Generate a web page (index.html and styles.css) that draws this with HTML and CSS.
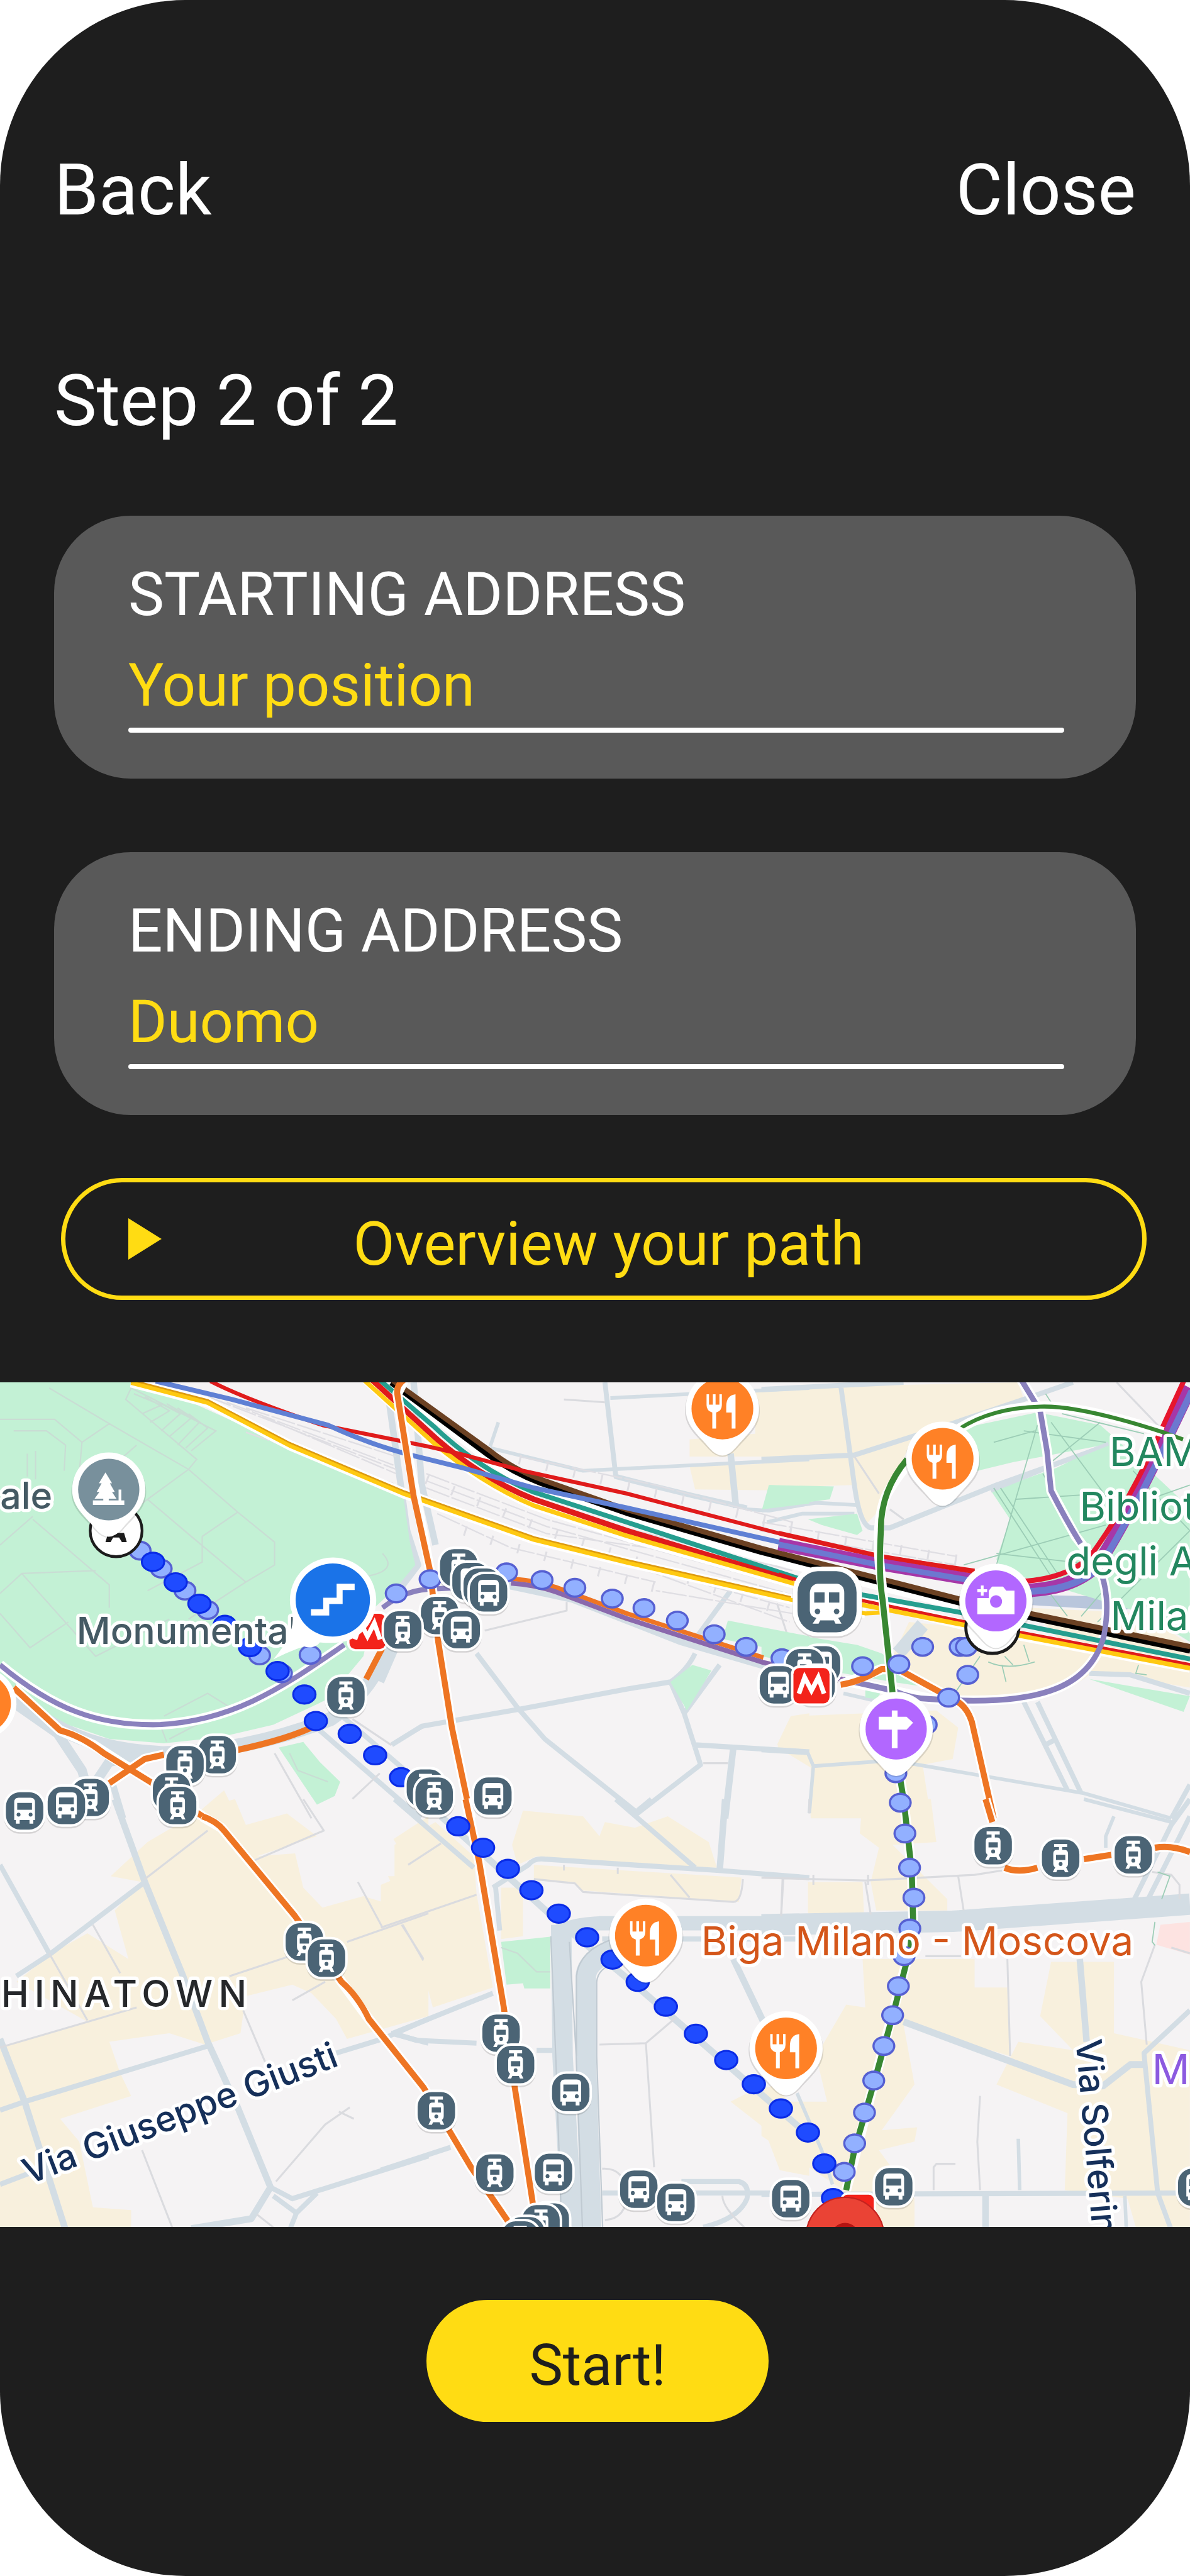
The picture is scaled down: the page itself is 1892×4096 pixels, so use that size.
FILE: index.html
```html
<!DOCTYPE html>
<html lang="en">
<head>
    <meta charset="UTF-8">
    <meta name="viewport" content="width=device-width, initial-scale=1.0">
    <title>Step 2 of 2</title>
    <link rel="stylesheet" href="styles.css">
</head>
<body>
    <div class="screen">
        <nav class="top-bar">
            <a href="#" class="nav-link">Back</a>
            <a href="#" class="nav-link">Close</a>
        </nav>
        <main>
            <form class="route-form" id="route">
                <h1 class="step">Step 2 of 2</h1>
                <div class="field">
                    <label for="start-address">STARTING ADDRESS</label>
                    <input type="text" id="start-address" value="Your position">
                </div>
                <div class="field">
                    <label for="end-address">ENDING ADDRESS</label>
                    <input type="text" id="end-address" value="Duomo">
                </div>
                <button type="button" class="overview-btn">
                    <svg class="play" viewBox="0 0 53 66" aria-hidden="true"><path d="M0 0L53 33L0 66Z"/></svg>
                    <span class="btn-text">Overview your path</span>
                </button>
            </form>

            <svg class="map" viewBox="0 0 2500 1775" role="img" aria-label="Map of the path">
                <defs>
                    <ellipse id="dl" rx="38" ry="31" fill="#92b0ff" stroke="#5660d2" stroke-width="8"/>
                    <ellipse id="dd" rx="41" ry="32" fill="#1f4bff" stroke="#0a2be6" stroke-width="7"/>
                    <g id="stop">
                        <rect x="-76" y="-66" width="152" height="146" rx="58" fill="#000" opacity=".13"/>
                        <rect x="-73" y="-70" width="146" height="140" rx="56" fill="#4b6475" stroke="#fff" stroke-width="9"/>
                    </g>
                    <g id="tram">
                        <use href="#stop"/>
                        <path fill="#fff" d="M-24 -50H24V-39H6V-29H14Q27 -29 27 -16V18Q27 28 20 32L29 49H16L12 40H-12L-16 49H-29L-20 32Q-27 28 -27 18V-16Q-27 -29 -14 -29H-6V-39H-24Z"/>
                        <rect x="-17" y="-12" width="34" height="18" fill="#4b6475"/>
                        <circle cy="20" r="7" fill="#4b6475"/>
                    </g>
                    <g id="bus">
                        <use href="#stop"/>
                        <path fill="#fff" d="M-22 -46H22Q38 -46 38 -30V32H32V45H18V32H-18V45H-32V32H-38V-30Q-38 -46 -22 -46Z"/>
                        <rect x="-27" y="-28" width="54" height="24" fill="#4b6475"/>
                        <circle cx="-22" cy="13" r="7" fill="#4b6475"/>
                        <circle cx="22" cy="13" r="7" fill="#4b6475"/>
                    </g>
                    <g id="metro">
                        <rect x="-75" y="-70" width="150" height="140" rx="30" fill="#fff"/>
                        <rect x="-66" y="-61" width="132" height="124" rx="22" fill="#f3231b"/>
                        <path d="M-46 29L-25 -28L0 18L25 -28L46 29" fill="none" stroke="#fff" stroke-width="17"/>
                    </g>
                    <g id="pin">
                        <path d="M-137 8A137 132 0 0 1 137 8C137 68 90 98 50 143Q0 195 -50 143C-90 98 -137 68 -137 8Z" fill="#000" opacity=".12"/>
                        <path d="M-134 0A134 130 0 0 1 134 0C134 60 92 88 48 138Q0 192 -48 138C-92 88 -134 60 -134 0Z" fill="#fff"/>
                    </g>
                    <g id="food">
                        <use href="#pin"/>
                        <ellipse rx="113" ry="108" fill="#ff8126"/>
                        <path fill="#fff" d="M-58 -50H-49V-14H-35V-50H-25V-14H-11V-50H-2V-12Q-2 8 -23 14V70H-37V14Q-58 8 -58 -12ZM48 -50V70H34V14H14V-8Q14 -46 48 -50Z"/>
                    </g>
                </defs>

                <g transform="scale(.574 .5995)">
                    <!-- land -->
                    <rect width="4356" height="2962" fill="#f5f3f4"/>
                    <g class="built">
                        <path transform="translate(0 -40)" d="M700 1568L820 1470L870 1568Z"/>
                        <path transform="translate(0 1461)" d="M540 150L700 60L780 20L860 0L900 90L1050 50L1160 130L940 200L1080 190L1110 310L1180 380L1330 340L1400 360L1450 330L1420 270L1520 270L1440 140L1568 60V760L1270 840L1230 770L1140 680L1070 650L900 690L880 820L750 860L620 820L400 850L440 960L480 1040L220 1120L290 1200L340 1430L480 1440V1500H0V870L320 780L60 640L190 540L320 470L470 560L420 390L520 290L405 270Z"/>
                        <path transform="translate(1394 -40)" d="M1370 70H1568V300H1130V240L1370 220ZM1130 335L1568 320V420L1150 415ZM1500 1210L1568 1200V1335L1450 1310Z"/>
                        <path transform="translate(1394 1461)" d="M480 160L520 40L740 60L800 130L820 80L930 100L1050 60L1200 150L1230 240L1140 240L570 200L500 230ZM50 160L200 80L340 200L350 330L410 660L190 730L160 620L110 760L0 800V300L50 280ZM560 230L1320 275L1310 360L740 320L700 290L560 285ZM440 310H520V480L440 490ZM1280 1060L1340 1030L1450 1000L1568 1180V1320L1460 1300L1400 1150Z"/>
                        <path transform="translate(2787 -40)" d="M0 60L940 40L960 100L560 220L440 480L380 540L340 400L0 410ZM540 880L750 900L1250 1000Q1200 1110 1000 1140L700 1150L540 1060L480 1000ZM980 830L1400 850L1568 960V1110L1200 1050ZM60 1310L120 1210L640 1190L720 1250L700 1360L590 1380L620 1568H180V1390L60 1320Z"/>
                        <path transform="translate(2787 1461)" d="M170 290H370L375 400H170ZM180 0H300V60H180ZM370 0H620L640 150L480 160L680 350L680 390H420L400 290L430 170L360 120ZM370 560H780V660H900L910 900L520 790L560 1000L440 1160L570 1150L560 1200L430 1230L560 1400V1500H400L300 1370L0 1180V1060L240 1060L200 900L310 720L380 730ZM1060 570H1290V820L1568 880V1500H1370L1340 1400L1110 1370L1120 1100L860 1000L940 850L1140 880L1020 760Z"/>
                    </g>
                    <path transform="translate(2787 1461)" fill="#fde3e1" d="M1460 440L1568 430V545L1445 510Z"/>
                    <path class="water" transform="translate(2787 -40)" d="M990 785L1230 790L1390 820L1320 840L980 820Z"/>

                    <!-- roads -->
                    <g class="road">
                        <g transform="translate(0 -40)">
                            <path class="w50" d="M1430 900Q1400 1100 1210 1220Q900 1335 600 1340Q350 1330 200 1240L0 1090"/>
                            <path class="w35" d="M60 1170L210 1270L300 1400L330 1500M330 1470L400 1370L560 1340"/>
                            <path class="w26" d="M410 1440L450 1568M1420 80L1490 560L1530 680L1450 780"/>
                            <path class="w20" d="M1170 1260L1540 1568M1240 1200L1568 1470"/>
                            <path class="w8" d="M1005 1340L1140 1568M1290 1220L1430 1310L1568 1240M1290 1500L1390 1410"/>
                        </g>
                        <g transform="translate(0 1461)">
                            <path class="w26" d="M420 0L530 290L670 620L760 850L870 1080L990 1360L920 1470L700 1505M0 840L90 1060L240 1510"/>
                            <path class="w20" d="M0 230L180 540M60 620L180 545L530 290M0 1090L90 1060L760 865M0 1350L110 1310M990 1360L1070 1400L1568 1250M1000 1390L1085 1450L1160 1380M1085 1450L1060 1510M1230 890L1400 840L1568 770M1430 820L1568 855"/>
                            <path class="w8" d="M180 540L320 775M530 280L760 110M340 440L440 610M520 1230L630 1500M890 740L970 920M1010 1340L1190 1140L1280 1080M1240 1095L1295 1120M930 215L1185 110L1110 0M0 870L500 730M840 620L1060 550M1270 500L1568 400M1310 290L1400 450M1470 440L1550 560M1070 705L1190 640M940 1455L1000 1500"/>
                        </g>
                        <g transform="translate(1394 -40)">
                            <path class="w26" d="M120 40L150 400L200 610M0 1090L50 980M1280 290L1300 480M1290 1320L1260 1568M430 745L700 800L1100 950L1568 1080"/>
                            <path class="w20" d="M820 40L860 370Q1100 430 1340 480M350 990L500 1180L600 1290L940 1550L1170 1380L1110 1200L1060 1090M40 1310L150 1245L510 1185L900 1115L1060 1090Q1120 1050 1150 990M1110 1200L1240 1030M1140 1310L1568 1335M1150 940L1280 770"/>
                            <path class="w14" d="M840 95L1568 60M400 270L740 350L1568 310M1340 485L1420 490L1568 465M400 265L430 180"/>
                            <path class="w8" d="M670 100L820 110M380 910L680 840L680 810M1180 1375H1270M1450 815L1510 990"/>
                        </g>
                        <g transform="translate(1394 1461)">
                            <path class="w75" d="M660 440L665 900L700 1510M770 1510L750 900V620Q755 560 870 520"/>
                            <path class="w50" d="M670 460Q700 440 800 435H1568"/>
                            <path class="w26" d="M220 60L650 430L930 650L1568 1180M1260 0L1240 250M1290 560L1400 780"/>
                            <path class="w20" d="M50 0L340 240M860 0L1150 240M940 40L990 0M410 310L540 230Q560 205 600 210L1240 250L1568 275M420 310L435 460M45 820L410 680M45 820L130 845L350 855M570 880H640M0 1300L255 1220M810 1380H1568M1100 1340H1310Q1350 1350 1340 1400Q1310 1470 1180 1500M810 490H1568"/>
                            <path class="w8" d="M800 860L970 855L1080 765M970 855L1000 1290M560 280L710 295L740 325L1290 360Q1320 360 1325 280M1060 265L1130 345M1470 280L1465 410M810 1295Q890 1290 900 1380Q900 1470 820 1475M1250 1390Q1250 1430 1330 1500M100 230L220 155M0 450L350 335M80 440L155 565M670 230V250M867 240V262"/>
                            <!-- kerbs of the wide avenue -->
                            <path class="kerb" d="M622 480L640 900L662 1510M690 500L715 900L738 1510M716 900V620Q725 530 850 490M790 900V640Q795 590 860 575M790 900L812 1510"/>
                        </g>
                        <g transform="translate(2787 -40)">
                            <path class="w50" d="M500 990L590 890"/>
                            <path class="w20" d="M290 50L340 400Q360 540 400 550H470L860 400L1270 260M0 310L340 295L650 200L960 100L1140 40M960 1160L1120 1470M1010 1160L1170 1480M1040 1310L1080 1290M1200 1060L1350 1065L1568 1130M1500 1568L1568 1450M0 65L300 50L520 40"/>
                            <path class="w14" d="M0 490L200 462L350 470M20 530L150 500H340M190 1385L480 1365L1180 1480L1500 1568M0 1330L170 1340L190 1385L175 1550M300 1130L480 1170"/>
                            <path class="w8" d="M340 300L430 430M470 485L520 520M1300 40L1490 230"/>
                        </g>
                        <g transform="translate(2787 1461)">
                            <path class="w75" d="M0 440L700 428L1568 368"/>
                            <path class="w26" d="M520 780L1140 1000L1250 1005L1350 930H1400M1165 560L1190 850M820 1390V1510"/>
                            <path class="w20" d="M1568 740L1400 890L1450 1380L1500 1510M0 1385L1568 1380M1568 0L1500 90L1360 360M1568 60L1410 360"/>
                            <path class="w14" d="M1180 0L1500 80M940 1190L945 1370M1330 1390L1335 1500M130 1030L220 1230L260 1350M1260 170V130L1290 60"/>
                            <path class="w8" d="M0 275L380 285L780 265L880 250M80 280L72 410M380 290L400 405M720 270L740 390M190 265V300M390 265V300M900 560L910 900M1440 510L1390 640L1410 860M800 1040L790 1200L800 1370M630 1370V1290L640 1278H710M600 550H730M1500 520L1568 540M175 0V50M1430 255L1500 265L1530 300V350"/>
                        </g>
                    </g>

                    <!-- parks -->
                    <g class="park">
                        <path transform="translate(0 -40)" d="M0 40H480L700 110L1000 240L1400 400L1475 430L1500 600L1520 680L1450 760L1370 830L1330 1000L1200 1150L1000 1240L800 1285L600 1305L400 1290L250 1240L100 1160L0 1080ZM1020 1320L1110 1300L1170 1370L1245 1440L1225 1490L1160 1520Z"/>
                        <path transform="translate(1394 -40)" d="M1420 400L1568 410V465L1395 485ZM1270 875L1568 930V1000L1250 940ZM1140 1030L1210 1050L1120 1190L1060 1090Z"/>
                        <path transform="translate(1394 1461)" d="M440 500L620 482V663H525L520 645L460 650Z"/>
                        <path transform="translate(2787 -40)" d="M30 400L265 405L250 450L10 480ZM170 520L350 500L370 560L350 575L220 540ZM740 200L1010 145L1240 190L1300 240L1568 480V950L1400 850L880 700L860 660L910 520L840 420L1080 340L1250 260L920 320L790 350ZM0 905L350 960L440 990L620 1110L480 1090L300 1060L0 1000ZM380 1110L440 1125L420 1150L380 1145ZM1200 1080L1568 1140L1545 1195Z"/>
                    </g>
                    <path class="road w14" transform="translate(2787 -40)" d="M840 420L1270 255"/>
                    <g class="trail">
                        <g transform="translate(0 -40)">
                            <path d="M180 60L400 185L690 345L870 495L1005 600V680L900 740L690 870M400 185L300 250L290 360M0 170H200L300 250M50 210H170L240 260L235 350M690 345L540 450L380 560M540 450L700 580L900 740M350 700L80 710L0 780M80 710L350 1000L620 870M120 520L400 750V830M690 345L720 310L460 100L480 60L790 210L700 280M0 610L120 510M500 260L380 360M0 850L110 970L250 880M740 580V670L540 770M1400 640Q1460 700 1340 720M590 1250L610 1300M600 1210L760 1130L860 1190M620 1290L740 1230M130 280V380M100 290V370M870 495L740 580"/>
                            <path d="M490 80L590 120L520 150M530 90L620 140L550 180M570 105L660 150L590 210M610 115L700 165L620 230M650 130L730 180L650 260M690 150L760 200L680 270M1060 1340L1090 1400L1200 1440"/>
                        </g>
                        <path transform="translate(1394 1461)" d="M440 520L500 540L570 605H620"/>
                        <path class="trail-dark" transform="translate(2787 -40)" d="M1010 190L860 680M850 410L1060 720M875 410L1090 720M930 450L1250 430M1030 360L1120 510M1060 180L1300 490L1568 400M740 680L1260 540M860 640L1230 680M1100 150L1400 220M960 210L1260 250M850 250L1000 210M1060 320L1240 180M1230 880L1568 560M1040 760L1120 860M1170 860L1260 760M1360 350L1568 560M700 1140L800 1000M880 1030L895 1090M830 1020Q900 1050 1000 1020M890 1000L920 1030M960 960L980 1020M1380 1030L1370 1060L1410 1065M1040 80L1060 110"/>
                        <path class="trail-dark" transform="translate(2787 1461)" d="M1450 255L1495 270L1465 350M1440 430L1430 500L1440 512"/>
                    </g>

                    <!-- rail yard -->
                    <g class="yard" transform="translate(0 -40)">
                        <path d="M760 90L1450 345M830 110L1440 330M900 130L1450 300M900 215L1440 395M960 160L1450 360"/>
                        <path d="M1560 360L2000 520L2900 760M1560 385L2000 545L2900 785M1560 410L2000 570L2900 690M1560 440L2000 595L2890 830M1580 470L1850 570L2400 710L2890 880M1600 500L1870 620L2400 740M1700 340L2000 480L2900 700M1900 300L2400 400L2900 530M2900 850L2400 770M2780 560L3500 680M2790 530L3500 650M2790 650L3450 800"/>
                        <path class="ties" d="M1560 380L2000 560L2890 850M1700 560L1850 610L2400 760M1900 310L2900 545M2790 545L3560 670"/>
                    </g>

                    <!-- transit lines -->
                    <g class="line" transform="translate(0 -40)">
                        <path class="halo" d="M480 40L760 110L1060 260L1480 430L1954 590L2294 670L2894 800L3167 850M1340 30L1594 255Q1780 400 1954 470L2294 580L2904 745L3527 890L4356 1040M1414 30L1794 310Q1880 370 1980 410L2294 510L2787 650L3507 820"/>
                        <path class="halo" d="M0 1030C200 1190 360 1240 560 1240C860 1235 1060 1090 1260 960"/>
                        <path class="halo" d="M3087 1085L3407 1150Q3700 1170 3847 1120Q4000 1070 4040 930Q4070 780 4017 680L3937 580L3847 420L3832 280L3807 140L3737 30"/>
                        <path stroke="#dd9a10" stroke-width="14" d="M480 36L760 106L1060 256L1480 426L1954 586L2294 666L2894 796"/>
                        <path stroke="#ffc911" stroke-width="14" d="M480 42L760 112L1060 262L1480 432L1954 592L2294 672L2894 802L3167 850L3240 846"/>
                        <path stroke="#000" stroke-width="22" d="M1432 40L1786 292Q1880 356 1980 392L2294 497L2787 634L3147 722L3507 810L4356 980"/>
                        <path stroke="#6b4123" stroke-width="18" d="M1438 34L1794 280Q1880 345 1980 380L2294 486L2787 622L3147 710L3507 798L4356 966"/>
                        <path stroke="#259e8f" stroke-width="17" d="M1380 24L1594 200Q1760 350 1954 425L2294 530L2914 725L3157 785L3507 845L4356 1010"/>
                        <path stroke="#e01b1b" stroke-width="20" d="M1360 30L1594 235Q1760 375 1954 450L2294 560L2904 735"/>
                        <path stroke="#e01b1b" stroke-width="12" d="M2850 712L3157 805L3507 875L4356 1030"/>
                        <path stroke="#ffc911" stroke-width="16" d="M1330 30L1594 258Q1770 398 1954 472L2294 578L2904 745L3157 820L3527 890L4356 1042"/>
                        <path stroke="#e01b1b" stroke-width="14" d="M770 36Q900 100 1180 190L1568 265L1680 290L1914 350L2294 430L2874 575L3217 650L3567 700"/>
                        <path stroke="#5f80d4" stroke-width="17" d="M570 36L850 100L1200 190Q1380 270 1568 310L1694 340L1954 410L2294 480L2874 605"/>
                        <path stroke="#a637a8" stroke-width="44" d="M2850 607L3217 677L3580 735"/>
                        <path stroke="#e01b1b" stroke-width="15" d="M2850 568L3217 648L3567 704"/>
                        <path stroke="#6d78d0" stroke-width="20" d="M2850 608L3217 680L3580 738"/>
                        <path stroke="#a637a8" stroke-width="48" d="M3640 765Q3900 790 4017 680Q4140 500 4356 60"/>
                        <path stroke="#6d78d0" stroke-width="24" d="M3640 768Q3900 795 4022 690Q4150 500 4362 70"/>
                        <path stroke="#e6162d" stroke-width="18" d="M3640 738Q3880 750 3990 650Q4120 480 4220 270L4335 30"/>
                        <path stroke="#8a81bd" stroke-width="18" d="M0 1030C200 1190 360 1240 560 1240C860 1235 1060 1090 1260 960M1400 830Q1480 770 1568 765L1674 760"/>
                        <path class="halo" d="M1480 30L1454 80L1474 200L1574 700L1604 950L1654 1250L1724 1568"/>
                        <path stroke="#ee7523" stroke-width="16" d="M1870 728Q1960 735 2034 758L2294 850L2794 1005"/>
                        <path stroke="#8a68ac" stroke-width="17" d="M1870 744Q1960 750 2034 774L2294 868L2794 1022L3087 1082"/>
                        <path stroke="#8a81bd" stroke-width="20" d="M3087 1082L3267 1120Q3340 1150 3407 1150Q3700 1170 3847 1120Q4000 1070 4040 930Q4070 780 4017 680M3955 605Q3900 520 3847 420L3832 280L3807 140L3737 30"/>
                        <path class="halo" d="M3077 1100L3227 1045H3287L3487 1150Q3537 1170 3557 1230L3637 1568"/>
                        <path class="halo" d="M50 1110L220 1260L340 1310L550 1440L740 1560M400 1445L530 1360L600 1345"/>
                        <g stroke="#ee7523" stroke-width="22">
                            <path d="M1480 30Q1450 50 1454 80L1474 200L1514 440L1574 700L1604 950L1654 1250L1724 1568"/>
                            <path d="M50 1110L220 1260Q300 1280 380 1340L550 1440L740 1560M400 1445L530 1360L600 1345M860 1330Q1060 1290 1160 1240M1340 1080L1400 970"/>
                            <path d="M3077 1100Q3147 1090 3227 1045H3287L3487 1150Q3537 1170 3557 1230L3637 1568"/>
                        </g>
                        <path class="halo" d="M4257 215Q3950 120 3807 125Q3620 130 3500 210Q3340 270 3247 430Q3200 520 3224 720L3267 1130"/>
                        <path stroke="#388732" stroke-width="14" d="M4330 240L4257 215Q3950 120 3807 125Q3620 130 3500 210"/>
                        <path stroke="#388732" stroke-width="22" d="M3320 310Q3222 420 3224 560Q3215 720 3230 800L3267 1130"/>
                    </g>
                    <g class="line" transform="translate(0 1461)">
                        <path class="halo" d="M740 60L810 100L1080 410L1250 640L1350 770L1550 1010L1724 1290L1860 1480M1704 0L1754 220L1844 730L1884 1010L1954 1440M3607 0L3632 80M3677 240Q3727 260 3797 240M3967 210L4067 195M4227 170Q4287 160 4356 185M3290 -100L3307 0L3337 250L3342 420L3332 520L3197 1000L3097 1370"/>
                        <g stroke="#ee7523" stroke-width="22">
                            <path d="M740 60Q790 75 820 110L1080 410L1250 640Q1310 690 1350 770L1550 1010L1724 1290L1860 1480"/>
                            <path d="M1704 0L1754 220L1844 730L1884 1010L1954 1440M3607 0L3632 80M3677 240Q3727 260 3797 240M3967 210L4067 195M4227 170Q4287 160 4356 185"/>
                        </g>
                        <path stroke="#388732" stroke-width="22" d="M3290 -100L3307 0L3337 250L3342 420L3332 520L3267 760L3197 1000L3127 1230L3097 1370"/>
                    </g>

                    <!-- walking dots -->
                    <g transform="translate(0 -40)">
                        <use href="#dl" x="513" y="630"/><use href="#dl" x="590" y="693"/><use href="#dl" x="677" y="770"/><use href="#dl" x="760" y="838"/><use href="#dl" x="950" y="997"/><use href="#dl" x="1030" y="1060"/><use href="#dl" x="1135" y="995"/><use href="#dl" x="1450" y="780"/>
                        <use href="#dl" x="1574" y="730"/><use href="#dl" x="1854" y="706"/><use href="#dl" x="1984" y="733"/><use href="#dl" x="2104" y="760"/><use href="#dl" x="2241" y="798"/><use href="#dl" x="2357" y="831"/><use href="#dl" x="2479" y="875"/><use href="#dl" x="2614" y="923"/><use href="#dl" x="2731" y="967"/><use href="#dl" x="2862" y="1007"/>
                        <use href="#dl" x="3157" y="1035"/><use href="#dl" x="3290" y="1028"/><use href="#dl" x="3377" y="967"/><use href="#dl" x="3514" y="967"/><use href="#dl" x="3537" y="967"/><use href="#dl" x="3542" y="1065"/><use href="#dl" x="3472" y="1145"/><use href="#dl" x="3390" y="1240"/><use href="#dl" x="3279" y="1410"/><use href="#dl" x="3295" y="1513"/>
                        <use href="#dd" x="560" y="669"/><use href="#dd" x="643" y="741"/><use href="#dd" x="730" y="816"/><use href="#dd" x="823" y="890"/><use href="#dd" x="915" y="968"/><use href="#dd" x="1016" y="1052"/><use href="#dd" x="1114" y="1134"/><use href="#dd" x="1156" y="1227"/><use href="#dd" x="1280" y="1272"/><use href="#dd" x="1373" y="1347"/><use href="#dd" x="1468" y="1424"/>
                        <ellipse cx="425" cy="560" rx="95" ry="91" fill="#fff" stroke="#1c1c1c" stroke-width="10"/>
                        <path d="M386 600L396 568H454L464 600H446L436 584H414L405 600Z" fill="#1c1c1c"/>
                        <ellipse cx="3632" cy="900" rx="97" ry="90" fill="#fff" stroke="#1c1c1c" stroke-width="11"/>
                    </g>
                    <g transform="translate(0 1461)">
                        <use href="#dl" x="3312" y="120"/><use href="#dl" x="3329" y="240"/><use href="#dl" x="3345" y="345"/><use href="#dl" x="3330" y="453"/><use href="#dl" x="3309" y="550"/><use href="#dl" x="3288" y="655"/><use href="#dl" x="3267" y="757"/><use href="#dl" x="3235" y="865"/><use href="#dl" x="3198" y="986"/><use href="#dl" x="3164" y="1098"/><use href="#dl" x="3128" y="1206"/><use href="#dl" x="3090" y="1306"/>
                        <use href="#dd" x="1677" y="95"/><use href="#dd" x="1768" y="170"/><use href="#dd" x="1859" y="244"/><use href="#dd" x="1945" y="319"/><use href="#dd" x="2045" y="401"/><use href="#dd" x="2149" y="484"/><use href="#dd" x="2242" y="562"/><use href="#dd" x="2334" y="640"/><use href="#dd" x="2437" y="727"/><use href="#dd" x="2547" y="822"/><use href="#dd" x="2658" y="914"/><use href="#dd" x="2759" y="999"/><use href="#dd" x="2858" y="1084"/><use href="#dd" x="2957" y="1168"/><use href="#dd" x="3017" y="1277"/><use href="#dd" x="3049" y="1398"/>
                    </g>
                </g>

                <!-- place names -->
                <g class="names">
                    <text class="place" x="110" y="266" text-anchor="end">ale</text>
                    <text class="place" x="161" y="550">Monumentale</text>
                    <text class="district" x="530" y="1312" text-anchor="end">CHINATOWN</text>
                    <text class="street" transform="translate(60 1686) rotate(-21)">Via Giuseppe Giusti</text>
                    <text class="street" transform="translate(2260 1382) rotate(85)">Via Solferino</text>
                    <text class="food-name" x="1473" y="1204">Biga Milano - Moscova</text>
                    <text class="garden" x="2331" y="176">BAM</text>
                    <text class="garden" x="2268" y="291">Biblioteca</text>
                    <text class="garden" x="2240" y="405">degli Alberi</text>
                    <text class="garden" x="2333" y="521">Milano</text>
                    <text class="museum" x="2420" y="1474">M</text>
                </g>

                <g transform="scale(.574 .5995)">
                    <!-- stops -->
                    <g transform="translate(0 -40)">
                        <use href="#tram" x="330" y="1495"/><use href="#bus" x="243" y="1523"/><use href="#bus" x="90" y="1542"/>
                        <use href="#tram" x="795" y="1345"/><use href="#tram" x="677" y="1380"/><use href="#tram" x="628" y="1475"/><use href="#tram" x="650" y="1523"/>
                        <use href="#tram" x="1266" y="1138"/>
                        <use href="#tram" x="1679" y="690"/><use href="#bus" x="1724" y="738"/><use href="#bus" x="1765" y="758"/><use href="#bus" x="1788" y="778"/>
                        <use href="#tram" x="1609" y="857"/><use href="#metro" x="1345" y="912"/><use href="#tram" x="1474" y="908"/><use href="#bus" x="1688" y="907"/>
                        <use href="#tram" x="1557" y="1462"/><use href="#tram" x="1589" y="1490"/><use href="#bus" x="1804" y="1490"/>
                        <use href="#bus" x="3007" y="1030"/><use href="#tram" x="2945" y="1040"/><use href="#bus" x="2987" y="1100"/><use href="#bus" x="2849" y="1100"/><use href="#metro" x="2970" y="1102"/>
                        <rect x="2899" y="690" width="258" height="246" rx="92" fill="#000" opacity=".12"/>
                        <rect x="2901" y="686" width="254" height="244" rx="90" fill="#fff"/>
                        <rect x="2919" y="702" width="216" height="214" rx="74" fill="#4b6475"/>
                        <path fill="#fff" fill-rule="evenodd" d="M2992 746H3064Q3090 750 3090 778V842Q3088 862 3068 866L3080 886H3058L3052 874H3002L2996 886H2974L2988 866Q2966 862 2964 842V778Q2966 750 2992 746ZM2980 776V812H3018V776ZM3034 776V812H3072V776Z"/>
                        <circle cx="2992" cy="843" r="10" fill="#4b6475"/><circle cx="3062" cy="843" r="10" fill="#4b6475"/>
                    </g>
                    <g transform="translate(0 1461)">
                        <use href="#tram" x="1114" y="500"/><use href="#tram" x="1195" y="557"/>
                        <use href="#tram" x="1597" y="1092"/><use href="#tram" x="1834" y="820"/><use href="#tram" x="1887" y="930"/><use href="#bus" x="2089" y="1028"/>
                        <use href="#tram" x="1811" y="1310"/><use href="#bus" x="2026" y="1308"/>
                        <use href="#tram" x="2014" y="1482"/><use href="#tram" x="1980" y="1488"/><use href="#tram" x="1924" y="1530"/><use href="#tram" x="1904" y="1545"/>
                        <use href="#bus" x="2338" y="1367"/><use href="#bus" x="2474" y="1413"/><use href="#bus" x="2894" y="1400"/><use href="#bus" x="3271" y="1358"/>
                        <use href="#tram" x="3635" y="163"/><use href="#tram" x="3882" y="207"/><use href="#tram" x="4148" y="195"/><use href="#bus" x="4380" y="1360"/>
                    </g>

                    <!-- pins -->
                    <g transform="translate(0 -40)">
                        <ellipse cx="-70" cy="1165" rx="130" ry="125" fill="#fff"/>
                        <ellipse cx="-70" cy="1165" rx="110" ry="106" fill="#ff8126"/>
                        <use href="#food" x="2644" y="132"/>
                        <use href="#food" x="3450" y="308"/>
                        <g transform="translate(398 416)">
                            <use href="#pin"/>
                            <ellipse rx="112" ry="108" fill="#78909c"/>
                            <path fill="#fff" d="M-12 -60L12 -22H4L22 8H12L28 32H0V38H36V0H46V38H57V54H-58V38H-20V32H-52L-34 8H-44L-26 -22H-36Z"/>
                        </g>
                        <g transform="translate(1218 803)">
                            <path d="M-154 30A158 150 0 1 1 60 140Q20 155 -50 148Q-130 165 -218 208Q-130 110 -150 40Z" fill="#fff"/>
                            <ellipse rx="136" ry="128" fill="#1a73e8"/>
                            <path d="M-80 43H-24V3H25V-46H80" fill="none" stroke="#fff" stroke-width="22"/>
                        </g>
                        <g transform="translate(3645 806)">
                            <use href="#pin"/>
                            <ellipse rx="112" ry="107" fill="#b267ff"/>
                            <path fill="#fff" fill-rule="evenodd" d="M-68 -10H-26V-36L-14 -50H26L38 -36H68V47H-68ZM0 -20A22 22 0 1 0 1 -20Z"/>
                            <path d="M-50 -54V-18M-68 -36H-32" stroke="#fff" stroke-width="10"/>
                        </g>
                        <g transform="translate(3280 1255)">
                            <use href="#pin"/>
                            <ellipse rx="112" ry="107" fill="#b267ff"/>
                            <path fill="#fff" d="M-16 -65H5V-43H38L62 -22L38 2H5V67H-16V2H-64V-43H-16Z"/>
                        </g>
                    </g>
                    <g transform="translate(0 1461)">
                        <use href="#food" x="2364" y="478"/>
                        <use href="#food" x="2877" y="873"/>
                        <rect x="3080" y="1382" width="122" height="130" rx="22" fill="#f3231b" stroke="#fff" stroke-width="8"/>
                        <ellipse cx="3093" cy="1535" rx="143" ry="140" fill="#ea4335" stroke="#c5221f" stroke-width="5"/>
                        <ellipse cx="3093" cy="1535" rx="52" ry="50" fill="#b31412"/>
                    </g>
                </g>
            </svg>
        </main>
        <footer class="bottom-bar">
            <button type="submit" form="route" class="start-btn"><span class="btn-text">Start!</span></button>
        </footer>
    </div>
</body>
</html>
```

FILE: styles.css
```css
* {
    box-sizing: border-box;
}
body {
    margin: 0;
    background: white;
    font-family: Roboto, "Liberation Sans", sans-serif;
}
.screen {
    min-height: 100vh;
    display: flex;
    flex-direction: column;
    background: #1e1e1e;
    border-radius: 295px;
    overflow: hidden;
}
.top-bar {
    display: flex;
    justify-content: space-between;
    padding: 236px 86px 0;
}
.nav-link {
    color: white;
    font-size: 114px;
    line-height: 132px;
    text-decoration: none;
}
.route-form {
    display: flex;
    flex-direction: column;
    padding: 203px 86px 131px;
}
.step {
    margin: 0;
    color: white;
    font-size: 114px;
    font-weight: 400;
    line-height: 132px;
}
.field {
    display: flex;
    flex-direction: column;
    margin-top: 117px;
    padding: 70px 114px 73px 118px;
    background: #595959;
    border-radius: 122px;
}
.field label {
    color: white;
    font-size: 96px;
    line-height: 110px;
}
.field input {
    width: 100%;
    height: 110px;
    margin-top: 35px;
    padding: 0;
    border: 0;
    outline: none;
    background: transparent;
    color: #ffdc13;
    font-family: inherit;
    font-size: 94px;
    line-height: 110px;
}
.field::after {
    content: "";
    height: 8px;
    margin-top: 12px;
    background: white;
    border-radius: 4px;
}
.overview-btn {
    display: flex;
    align-items: center;
    height: 194px;
    margin: 100px -17px 0 11px;
    padding: 0 138px 0 100px;
    background: transparent;
    border: 7px solid #ffdc13;
    border-radius: 97px;
    color: #ffdc13;
    font-family: inherit;
    font-size: 96px;
    line-height: 110px;
    cursor: pointer;
}
.play {
    width: 53px;
    height: 66px;
    fill: #ffdc13;
}
.btn-text {
    flex: 1;
    padding-top: 16px;
    text-align: center;
}
.bottom-bar {
    display: flex;
    justify-content: center;
    padding: 116px 0 116px 8px;
}
.start-btn {
    display: flex;
    align-items: center;
    width: 544px;
    height: 194px;
    padding: 0;
    background: #ffdc13;
    border: 0;
    border-radius: 97px;
    color: #1e1e1e;
    font-family: inherit;
    font-size: 90px;
    line-height: 110px;
    cursor: pointer;
}

/* map */
.map {
    display: block;
    width: 100%;
    height: auto;
    overflow: hidden;
}
.built {
    fill: #f8f0dd;
}
.park {
    fill: #c3f1d5;
}
.water {
    fill: #b9c6dc;
}
.road {
    fill: none;
    stroke: #d3dde4;
    stroke-linejoin: round;
}
.w75 {
    stroke-width: 75px;
}
.w50 {
    stroke-width: 50px;
}
.w35 {
    stroke-width: 35px;
}
.w26 {
    stroke-width: 24px;
}
.w20 {
    stroke-width: 18px;
}
.w14 {
    stroke-width: 13px;
}
.w8 {
    stroke-width: 7px;
    stroke: #dadbdf;
}
.kerb {
    stroke-width: 5px;
    stroke: #c0cad2;
}
.trail {
    fill: none;
    stroke: #c9ddd4;
    stroke-width: 5px;
}
.trail-dark {
    stroke: #9ccdb6;
    stroke-width: 4px;
}
.yard {
    fill: none;
    stroke: #dfdee3;
    stroke-width: 5px;
    stroke-dasharray: 90 8;
}
.ties {
    stroke-width: 34px;
    stroke-dasharray: 7 95;
}
.line {
    fill: none;
    stroke-linejoin: round;
}
.halo {
    stroke: white;
    stroke-width: 36px;
}
.names {
    font-family: Inter, "Open Sans", sans-serif;
    font-weight: 500;
    stroke: white;
    stroke-width: 14px;
    stroke-linejoin: round;
    paint-order: stroke;
}
.place {
    fill: #455a64;
    font-size: 78px;
}
.district {
    fill: #26282b;
    font-size: 78px;
    letter-spacing: 12px;
}
.street {
    fill: #16305a;
    font-size: 75px;
}
.food-name {
    fill: #d4561a;
    font-size: 84px;
    font-weight: 400;
}
.garden {
    fill: #23875f;
    font-size: 84px;
    font-weight: 400;
}
.museum {
    fill: #8c5ae0;
    font-size: 88px;
    font-weight: 400;
}
```
